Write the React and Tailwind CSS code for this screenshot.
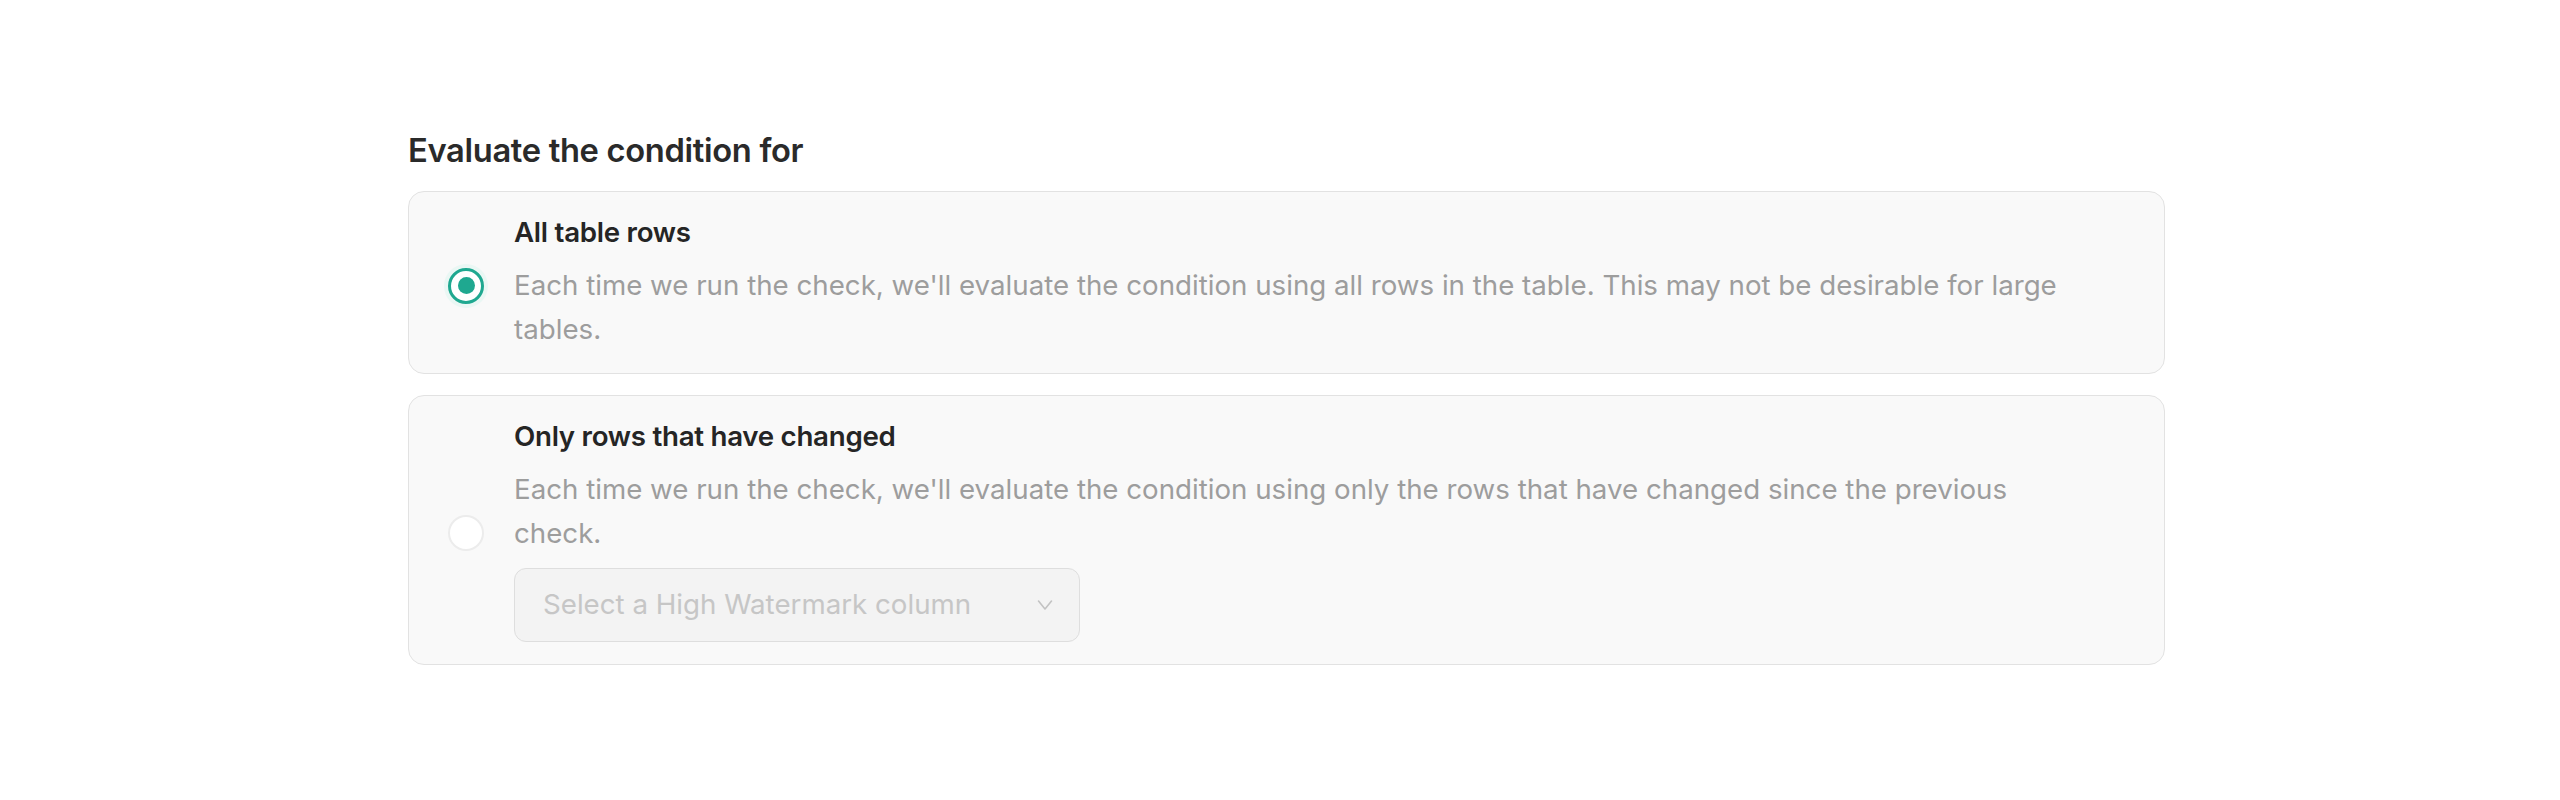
import React from "react";

function Radio({ checked }) {
  if (checked) {
    return (
      <div className="mt-[6px] flex h-[36px] w-[36px] shrink-0 items-center justify-center rounded-full border-[3px] border-[#1fa890] bg-white shadow-[0_0_0_4px_#eaf7f4]">
        <div className="h-[17px] w-[17px] rounded-full bg-[#1fa890]" />
      </div>
    );
  }
  return (
    <div className="mt-[6px] h-[36px] w-[36px] shrink-0 rounded-full border-2 border-[#ececec] bg-white" />
  );
}

function Option({ checked, title, desc, children }) {
  return (
    <div className="flex items-center gap-[30px] rounded-2xl border border-[#e2e2e2] bg-[#f9f9f9] py-[22px] pl-[39px] pr-6">
      <Radio checked={checked} />
      <div className="flex flex-col">
        <div className="text-[27.7px] leading-[36px] font-semibold tracking-[-0.01em] text-[#252525]">
          {title}
        </div>
        <div className="mt-[13px] max-w-[1565px] text-[27.7px] leading-[44px] text-[#9d9d9d]">
          {desc}
        </div>
        {children}
      </div>
    </div>
  );
}

export default function App() {
  return (
    <div
      className="min-h-[800px] w-full bg-white"
      style={{ fontFamily: "Inter, 'Liberation Sans', sans-serif" }}
    >
      <div className="ml-[408px] w-[1757px] pt-[130px]">
        <h2 className="text-[32.7px] leading-[40px] font-semibold tracking-[-0.01em] text-[#2a2a2a]">
          Evaluate the condition for
        </h2>
        <div className="mt-[21px] flex flex-col gap-[21px]">
          <Option
            checked
            title="All table rows"
            desc="Each time we run the check, we'll evaluate the condition using all rows in the table. This may not be desirable for large tables."
          />
          <Option
            title="Only rows that have changed"
            desc="Each time we run the check, we'll evaluate the condition using only the rows that have changed since the previous check."
          >
            <div className="mt-[13px] flex h-[74px] w-[566px] items-center justify-between rounded-xl border border-[#dedede] bg-[#f3f3f3] pl-[28px] pr-[26px]">
              <span className="text-[27.7px] text-[#c6c6c6]">
                Select a High Watermark column
              </span>
              <svg width="16" height="12" viewBox="0 0 16 12" fill="none">
                <path d="M1.5 2 L8 10 L14.5 2" stroke="#c2c2c2" strokeWidth="1.6" strokeLinecap="round" strokeLinejoin="round" />
              </svg>
            </div>
          </Option>
        </div>
      </div>
    </div>
  );
}
